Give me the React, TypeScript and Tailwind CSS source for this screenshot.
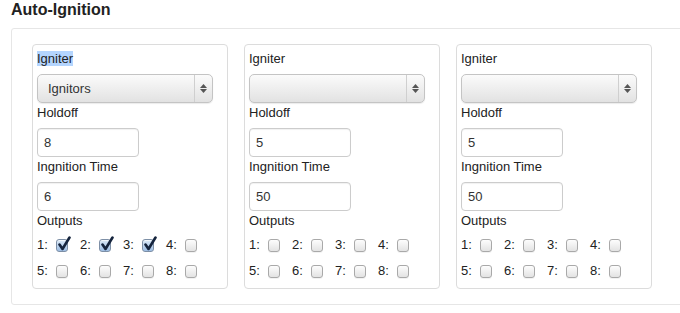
import React from "react";

const Check = ({ checked }: { checked: boolean }) =>
  checked ? (
    <span className="relative inline-block w-[12px] h-[13px] rounded-[3px] border border-[#7d8fa6] bg-gradient-to-b from-[#d9e8f7] to-[#9dbde3] shadow-[inset_0_1px_1px_rgba(255,255,255,0.7)]">
      <svg className="absolute left-[1px] top-[-4px]" width="13" height="15" viewBox="0 0 13 15">
        <path d="M1.5 8.5 L4.5 13 L11.5 1.5" fill="none" stroke="#15243d" strokeWidth="2.6" strokeLinecap="round" strokeLinejoin="round" />
      </svg>
    </span>
  ) : (
    <span className="inline-block w-[12px] h-[13px] rounded-[3px] border border-[#a9a9a9] bg-gradient-to-b from-[#fdfdfd] to-[#e3e3e3] shadow-[0_1px_0_rgba(0,0,0,0.05)]" />
  );

const Select = ({ value }: { value: string }) => (
  <div className="flex h-[29px] w-[176px] rounded-[5px] border border-[#c4c4c4] bg-gradient-to-b from-[#fbfbfb] to-[#e2e2e2] shadow-[0_1px_1px_rgba(0,0,0,0.08)]">
    <div className="flex-1 pl-[10px] flex items-center text-[13px] text-[#333]">{value}</div>
    <div className="w-[18px] border-l border-[#cfcfcf] flex flex-col items-center justify-center gap-[1px]">
      <svg width="7" height="4" viewBox="0 0 7 4"><path d="M0 4 L3.5 0 L7 4 Z" fill="#555" /></svg>
      <svg width="7" height="4" viewBox="0 0 7 4"><path d="M0 0 L3.5 4 L7 0 Z" fill="#555" /></svg>
    </div>
  </div>
);

const Input = ({ value }: { value: string }) => (
  <div className="h-[29px] w-[102px] rounded-[4px] border border-[#cccccc] bg-white shadow-[inset_0_1px_1px_rgba(0,0,0,0.06)] flex items-center pl-[6px] text-[13px] text-[#333]">
    {value}
  </div>
);

const Card = ({
  igniter,
  holdoff,
  time,
  checks,
  highlight,
}: {
  igniter: string;
  holdoff: string;
  time: string;
  checks: boolean[];
  highlight?: boolean;
}) => (
  <div className="w-[196px] shrink-0 rounded-[4px] border border-[#dcdcdc] bg-white px-[4px] pt-[4px] pb-[4px]">
    <div className="text-[13px] leading-[20px] mb-[5px] text-[#222]">
      {highlight ? <span className="bg-[#b4d5fe]">Igniter</span> : "Igniter"}
    </div>
    <Select value={igniter} />
    <div className="text-[13px] leading-[20px] mb-[5px] text-[#222]">Holdoff</div>
    <Input value={holdoff} />
    <div className="text-[13px] leading-[20px] mb-[5px] text-[#222]">Ingnition Time</div>
    <Input value={time} />
    <div className="text-[13px] leading-[20px] mb-[1px] text-[#222]">Outputs</div>
    <div className="grid grid-cols-[43px_43px_43px_43px]">
      {checks.map((c, i) => (
        <div key={i} className="h-[26px] flex items-center text-[13px] text-[#222]">
          <span className="w-[19px]">{i + 1}:</span>
          <Check checked={c} />
        </div>
      ))}
    </div>
  </div>
);

export default function App() {
  const none = [false, false, false, false, false, false, false, false];
  return (
    <div className="w-[680px] h-[313px] bg-white overflow-hidden" style={{ fontFamily: '"Liberation Sans", Arial, sans-serif' }}>
      <div className="pl-[11px] text-[16px] leading-[20px] font-bold text-[#222]">Auto-Ignition</div>
      <div className="mt-[8px] ml-[11px] w-[700px] h-[277px] rounded-[3px] border border-[#e6e6e6] pl-[20px] pt-[15px]">
        <div className="flex gap-[16px]">
          <Card igniter="Ignitors" holdoff="8" time="6" checks={[true, true, true, false, false, false, false, false]} highlight />
          <Card igniter="" holdoff="5" time="50" checks={none} />
          <Card igniter="" holdoff="5" time="50" checks={none} />
        </div>
      </div>
    </div>
  );
}
